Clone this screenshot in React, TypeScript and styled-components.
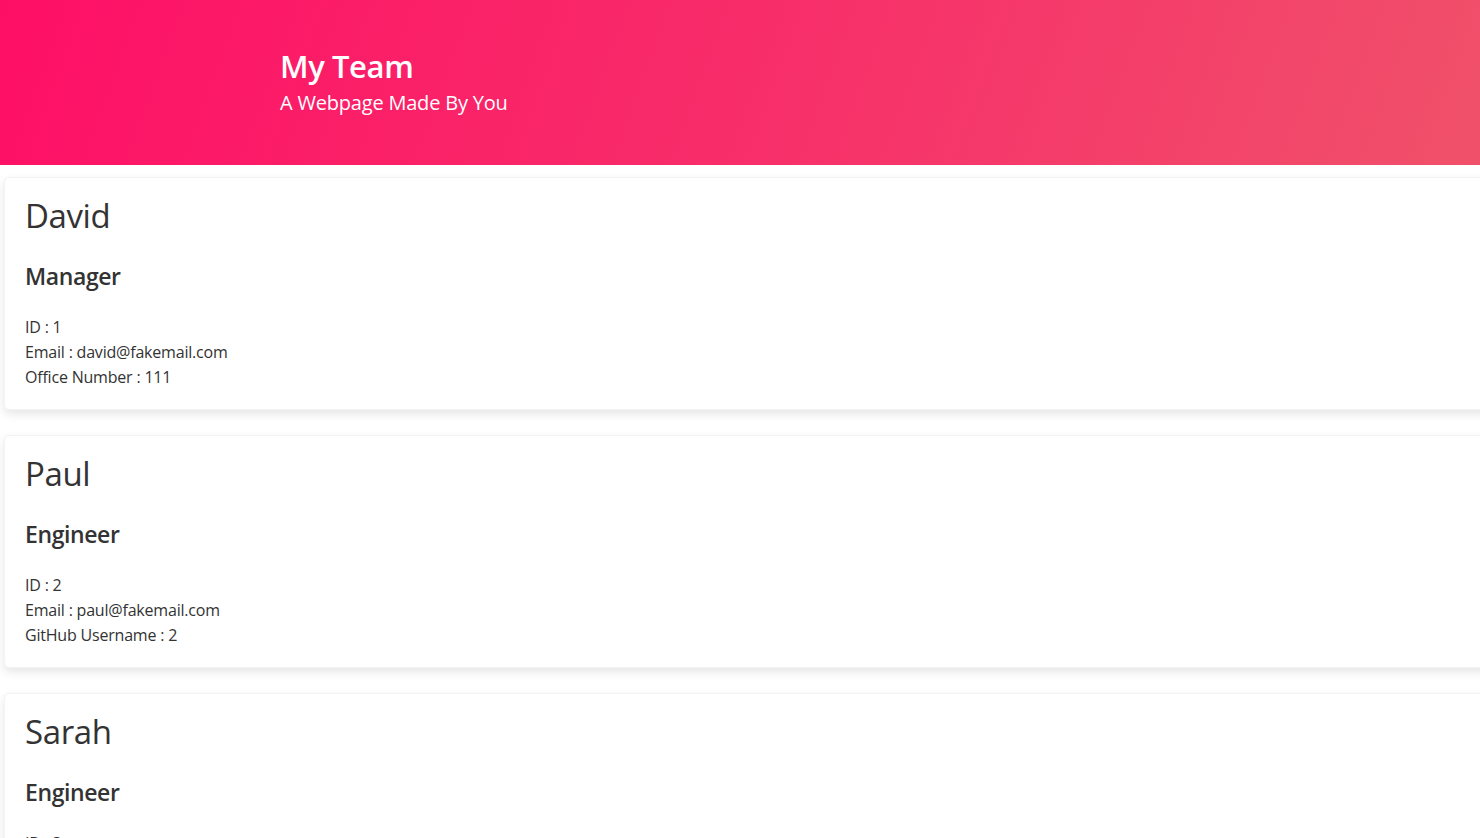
import styled, { createGlobalStyle } from 'styled-components';

const GlobalStyle = createGlobalStyle`
	html, body {
		margin: 0;
		padding: 0;
		overflow-x: hidden;
		background: #ffffff;
		font-family: 'Open Sans', 'Noto Sans', sans-serif;
		color: #333333;
	}
`;

const Header = styled.header`
	height: 165px;
	background: linear-gradient(110deg, #fe0f66 0%, #f7306a 55%, #f0516a 100%);
	color: #ffffff;
	padding: 0 0 0 280px;
	display: flex;
	flex-direction: column;
	justify-content: center;
	box-sizing: border-box;

	h1 {
		margin: 0 0 4px;
		font-size: 31px;
		font-weight: 600;
		line-height: 1.2;
		letter-spacing: -0.4px;
	}

	p {
		margin: 0;
		font-size: 20px;
		line-height: 1.4;
		letter-spacing: -0.2px;
	}
`;

const List = styled.main`
	display: flex;
	flex-direction: column;
	gap: 25px;
	padding: 12px 0 0 4px;
`;

const Card = styled.section`
	width: calc(100% + 20px);
	box-sizing: border-box;
	background: #ffffff;
	border-radius: 5px;
	border: 1px solid #f3f3f3;
	box-shadow: 0 4px 10px rgba(0, 0, 0, 0.1);
	padding: 18px 20px 20px;
	height: 233px;

	h2 {
		margin: 0;
		font-size: 33px;
		font-weight: 500;
		line-height: 1.2;
		letter-spacing: -0.4px;
	}

	h3 {
		margin: 27px 0 0;
		font-size: 23px;
		font-weight: 600;
		line-height: 1.2;
		letter-spacing: -0.4px;
	}
`;

const Details = styled.ul`
	list-style: none;
	margin: 25px 0 0;
	padding: 0;

	li {
		font-size: 16px;
		line-height: 25px;
		letter-spacing: -0.2px;
	}
`;

type Member = {
	name: string;
	role: string;
	id: number;
	email: string;
	extraLabel: string;
	extraValue: string;
};

const team: Member[] = [
	{ name: 'David', role: 'Manager', id: 1, email: 'david@fakemail.com', extraLabel: 'Office Number', extraValue: '111' },
	{ name: 'Paul', role: 'Engineer', id: 2, email: 'paul@fakemail.com', extraLabel: 'GitHub Username', extraValue: '2' },
	{ name: 'Sarah', role: 'Engineer', id: 3, email: 'sarah@fakemail.com', extraLabel: 'GitHub Username', extraValue: '3' },
];

export default function App() {
	return (
		<>
			<GlobalStyle />
			<Header>
				<h1>My Team</h1>
				<p>A Webpage Made By You</p>
			</Header>
			<List>
				{team.map((m) => (
					<Card key={m.id}>
						<h2>{m.name}</h2>
						<h3>{m.role}</h3>
						<Details>
							<li>ID : {m.id}</li>
							<li>Email : {m.email}</li>
							<li>
								{m.extraLabel} : {m.extraValue}
							</li>
						</Details>
					</Card>
				))}
			</List>
		</>
	);
}
